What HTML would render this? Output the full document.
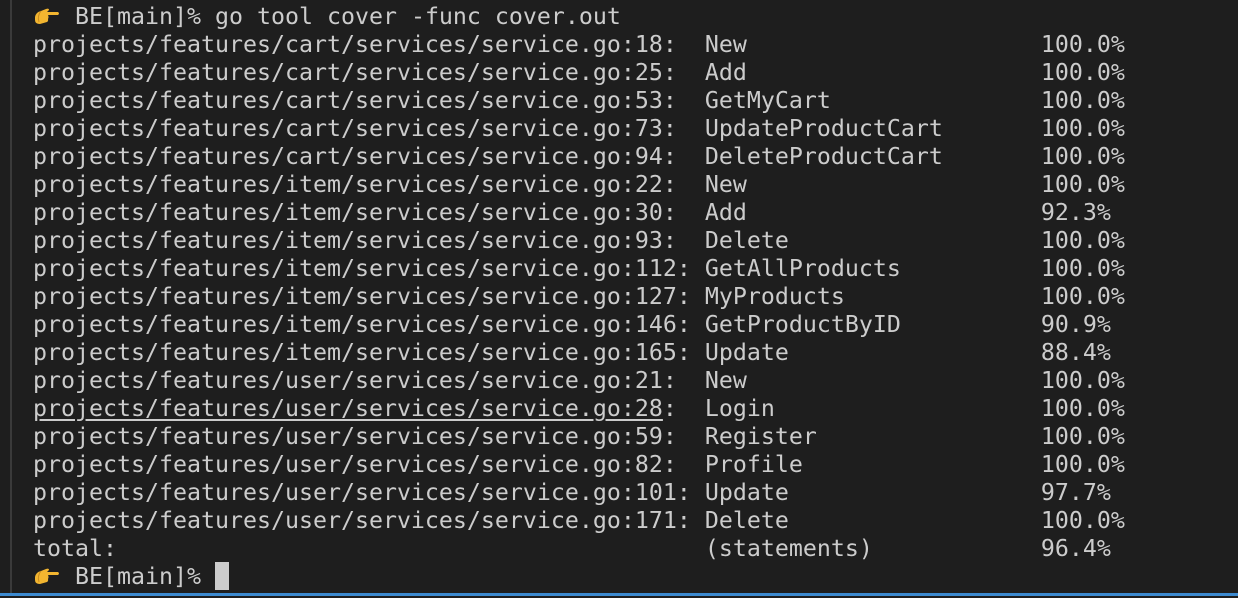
<!DOCTYPE html>
<html><head><meta charset="utf-8"><style>
html,body{margin:0;padding:0;}
body{width:1238px;height:596px;background:#1e1e1e;overflow:hidden;position:relative;}
.vl{position:absolute;left:10px;top:0;width:2px;height:594px;background:#3a3a3a;}
.bb{position:absolute;left:0;bottom:0;width:1238px;height:3px;background:#3c8ad0;}
pre{position:absolute;left:33px;top:3px;margin:0;font-family:"DejaVu Sans Mono","Liberation Mono",monospace;font-size:23.25px;line-height:28px;color:#cccccc;white-space:pre;}
.h{display:inline-block;width:28px;height:28px;vertical-align:top;}
.cur{display:inline-block;width:14px;height:28px;background:#cccccc;vertical-align:top;margin-top:-1px;}
u{text-decoration:underline;text-underline-offset:3px;}
</style></head><body>
<div class="vl"></div>
<pre><span class="h"><svg width="28" height="28" viewBox="0 0 28 28"><path d="M2 14 Q3 9 8 8 L13 6 Q16 5 16 7 L14 9 L25 9 Q27 10.5 25 12 L15 12 Q16 14 15 16 Q15.5 18 14 19 L7 21 Q2 21 2 17 Z" fill="#f2b530"/><path d="M8 8 Q4 13 6 19" stroke="#c98a1e" stroke-width="1" fill="none"/></svg></span> BE[main]% go tool cover -func cover.out
projects/features/cart/services/service.go:18:  New                     100.0%
projects/features/cart/services/service.go:25:  Add                     100.0%
projects/features/cart/services/service.go:53:  GetMyCart               100.0%
projects/features/cart/services/service.go:73:  UpdateProductCart       100.0%
projects/features/cart/services/service.go:94:  DeleteProductCart       100.0%
projects/features/item/services/service.go:22:  New                     100.0%
projects/features/item/services/service.go:30:  Add                     92.3%
projects/features/item/services/service.go:93:  Delete                  100.0%
projects/features/item/services/service.go:112: GetAllProducts          100.0%
projects/features/item/services/service.go:127: MyProducts              100.0%
projects/features/item/services/service.go:146: GetProductByID          90.9%
projects/features/item/services/service.go:165: Update                  88.4%
projects/features/user/services/service.go:21:  New                     100.0%
<u>projects/features/user/services/service.go:28</u>:  Login                   100.0%
projects/features/user/services/service.go:59:  Register                100.0%
projects/features/user/services/service.go:82:  Profile                 100.0%
projects/features/user/services/service.go:101: Update                  97.7%
projects/features/user/services/service.go:171: Delete                  100.0%
total:                                          (statements)            96.4%
<span class="h"><svg width="28" height="28" viewBox="0 0 28 28"><path d="M2 14 Q3 9 8 8 L13 6 Q16 5 16 7 L14 9 L25 9 Q27 10.5 25 12 L15 12 Q16 14 15 16 Q15.5 18 14 19 L7 21 Q2 21 2 17 Z" fill="#f2b530"/><path d="M8 8 Q4 13 6 19" stroke="#c98a1e" stroke-width="1" fill="none"/></svg></span> BE[main]% <span class="cur"></span></pre>
<div class="bb"></div>
</body></html>
